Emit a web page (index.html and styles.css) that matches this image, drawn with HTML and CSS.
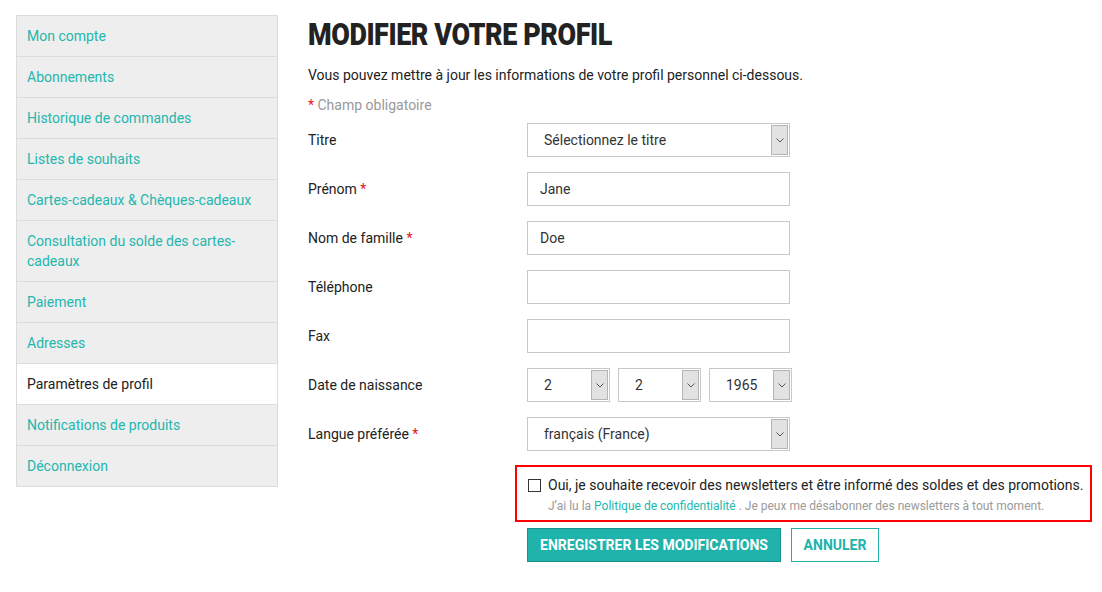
FILE: index.html
```html
<!DOCTYPE html>
<html lang="fr">
<head>
<meta charset="utf-8">
<title>Modifier votre profil</title>
<link rel="stylesheet" href="styles.css">
</head>
<body>
<div class="page">
  <nav class="sidebar">
    <a class="nav-item" href="#">Mon compte</a>
    <a class="nav-item" href="#">Abonnements</a>
    <a class="nav-item" href="#">Historique de commandes</a>
    <a class="nav-item" href="#">Listes de souhaits</a>
    <a class="nav-item" href="#">Cartes-cadeaux &amp; Chèques-cadeaux</a>
    <a class="nav-item" href="#">Consultation du solde des cartes-cadeaux</a>
    <a class="nav-item" href="#">Paiement</a>
    <a class="nav-item" href="#">Adresses</a>
    <span class="nav-item active">Paramètres de profil</span>
    <a class="nav-item" href="#">Notifications de produits</a>
    <a class="nav-item" href="#">Déconnexion</a>
  </nav>
  <main class="main">
    <h1 class="title">MODIFIER VOTRE PROFIL</h1>
    <p class="intro">Vous pouvez mettre à jour les informations de votre profil personnel ci-dessous.</p>
    <p class="required-note"><span class="req">*</span> Champ obligatoire</p>
    <form class="form">
      <div class="row">
        <label class="label">Titre</label>
        <div class="select wide"><span class="select-text pad16">Sélectionnez le titre</span><span class="arrow"><svg width="8" height="5" viewBox="0 0 8 5"><path d="M0.5 0.5 L4 4 L7.5 0.5" fill="none" stroke="#555" stroke-width="1"/></svg></span></div>
      </div>
      <div class="row">
        <label class="label">Prénom <span class="req">*</span></label>
        <div class="input">Jane</div>
      </div>
      <div class="row">
        <label class="label">Nom de famille <span class="req">*</span></label>
        <div class="input">Doe</div>
      </div>
      <div class="row">
        <label class="label">Téléphone</label>
        <div class="input"></div>
      </div>
      <div class="row">
        <label class="label">Fax</label>
        <div class="input"></div>
      </div>
      <div class="row">
        <label class="label">Date de naissance</label>
        <div class="date-group">
          <div class="select small"><span class="select-text pad16">2</span><span class="arrow"><svg width="8" height="5" viewBox="0 0 8 5"><path d="M0.5 0.5 L4 4 L7.5 0.5" fill="none" stroke="#555" stroke-width="1"/></svg></span></div>
          <div class="select small"><span class="select-text pad16">2</span><span class="arrow"><svg width="8" height="5" viewBox="0 0 8 5"><path d="M0.5 0.5 L4 4 L7.5 0.5" fill="none" stroke="#555" stroke-width="1"/></svg></span></div>
          <div class="select small"><span class="select-text pad16">1965</span><span class="arrow"><svg width="8" height="5" viewBox="0 0 8 5"><path d="M0.5 0.5 L4 4 L7.5 0.5" fill="none" stroke="#555" stroke-width="1"/></svg></span></div>
        </div>
      </div>
      <div class="row">
        <label class="label">Langue préférée <span class="req">*</span></label>
        <div class="select wide"><span class="select-text pad16">français (France)</span><span class="arrow"><svg width="8" height="5" viewBox="0 0 8 5"><path d="M0.5 0.5 L4 4 L7.5 0.5" fill="none" stroke="#555" stroke-width="1"/></svg></span></div>
      </div>
      <div class="newsletter">
        <div class="nl-line"><span class="checkbox"></span><span class="nl-text">Oui, je souhaite recevoir des newsletters et être informé des soldes et des promotions.</span></div>
        <div class="nl-sub">J’ai lu la <a href="#" class="link">Politique de confidentialité</a> . Je peux me désabonner des newsletters à tout moment.</div>
      </div>
      <div class="actions">
        <button type="button" class="btn btn-primary">ENREGISTRER LES MODIFICATIONS</button>
        <button type="button" class="btn btn-secondary">ANNULER</button>
      </div>
    </form>
  </main>
</div>
</body>
</html>
```

FILE: styles.css
```css
* { box-sizing: border-box; }
html, body { margin: 0; padding: 0; background: #fff; }
body { font-family: Roboto, "Liberation Sans", sans-serif; font-size: 14px; color: #222; }

.page { display: flex; align-items: flex-start; padding: 15px 0 0 16px; }

.sidebar {
  width: 262px;
  display: flex;
  flex-direction: column;
  border: 1px solid #dcdcdc;
  border-bottom: none;
  flex-shrink: 0;
}
.nav-item {
  display: block;
  background: #eeeeee;
  border-bottom: 1px solid #dcdcdc;
  padding: 10px 10px 10px 10px;
  line-height: 20px;
  color: #23b7ae;
  text-decoration: none;
  font-size: 14px;
}
.nav-item.active { background: #fff; color: #222; }

.main { margin-left: 30px; flex: 1; }
.title {
  margin: 0;
  padding-top: 2px;
  font-family: Roboto, sans-serif;
  font-weight: 900;
  font-size: 31px;
  line-height: 36px;
  color: #222;
  letter-spacing: -0.5px;
  transform: scaleX(0.87);
  transform-origin: left center;
  white-space: nowrap;
}
.intro { margin: 12px 0 0; line-height: 20px; color: #222; }
.required-note { margin: 10px 0 0; line-height: 20px; color: #999; }
.req { color: #e8111b; }

.form { margin-top: 8px; }
.row { display: flex; align-items: center; height: 34px; margin-bottom: 15px; }
.label { width: 219px; flex-shrink: 0; color: #222; }

.input {
  width: 263px; height: 34px;
  border: 1px solid #c8c8c8;
  padding: 0 12px;
  line-height: 32px;
  color: #333;
}
.select {
  display: flex; height: 34px;
  border: 1px solid #c8c8c8;
  color: #333;
}
.select.wide { width: 263px; }
.select.small { width: 83px; }
.select-text { flex: 1; line-height: 32px; white-space: nowrap; overflow: hidden; }
.pad16 { padding-left: 16px; }
.arrow {
  width: 17px;
  margin: 1px 1px 1px 0;
  background: #e2e2e2;
  border: 1px solid #b5b5b5;
  display: flex; align-items: center; justify-content: center;
}
.date-group { display: flex; gap: 8px; }

.newsletter {
  margin: -1px 0 6px 207px;
  width: 577px;
  border: 2px solid #ff0000;
  padding: 8px 0 6px 11px;
}
.nl-line { display: flex; align-items: center; height: 20px; }
.checkbox { width: 13px; height: 13px; border: 1px solid #333; margin-right: 7px; flex-shrink: 0; }
.nl-text { font-size: 14px; color: #222; white-space: nowrap; }
.nl-sub { font-size: 12px; color: #9a9a9a; margin-left: 20px; margin-top: 3px; line-height: 16px; }
.link { color: #23b7ae; text-decoration: none; }

.actions { display: flex; gap: 10px; margin-left: 219px; }
.btn {
  height: 34px;
  font-family: Roboto, sans-serif;
  font-weight: 700;
  font-size: 14px;
  padding: 0 10px;
  cursor: pointer;
}
.btn-primary { width: 254px; background: #20b3ab; border: 1px solid #17918a; color: #fff; }
.btn-secondary { width: 88px; background: #fff; border: 1px solid #20b3ab; color: #20b3ab; }
```
